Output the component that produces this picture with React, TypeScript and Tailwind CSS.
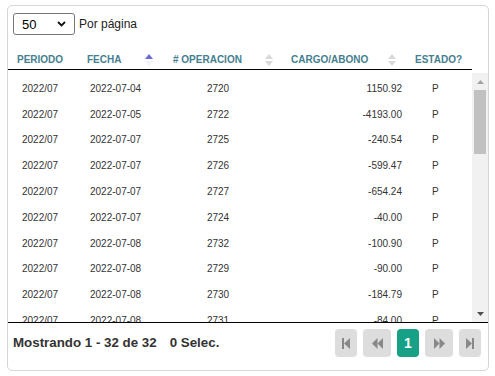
import React from 'react';

type Row = {
  periodo: string;
  fecha: string;
  operacion: string;
  monto: string;
  estado: string;
};

const rows: Row[] = [
  { periodo: '2022/07', fecha: '2022-07-04', operacion: '2720', monto: '1150.92', estado: 'P' },
  { periodo: '2022/07', fecha: '2022-07-05', operacion: '2722', monto: '-4193.00', estado: 'P' },
  { periodo: '2022/07', fecha: '2022-07-07', operacion: '2725', monto: '-240.54', estado: 'P' },
  { periodo: '2022/07', fecha: '2022-07-07', operacion: '2726', monto: '-599.47', estado: 'P' },
  { periodo: '2022/07', fecha: '2022-07-07', operacion: '2727', monto: '-654.24', estado: 'P' },
  { periodo: '2022/07', fecha: '2022-07-07', operacion: '2724', monto: '-40.00', estado: 'P' },
  { periodo: '2022/07', fecha: '2022-07-08', operacion: '2732', monto: '-100.90', estado: 'P' },
  { periodo: '2022/07', fecha: '2022-07-08', operacion: '2729', monto: '-90.00', estado: 'P' },
  { periodo: '2022/07', fecha: '2022-07-08', operacion: '2730', monto: '-184.79', estado: 'P' },
  { periodo: '2022/07', fecha: '2022-07-08', operacion: '2731', monto: '-84.00', estado: 'P' },
  { periodo: '2022/07', fecha: '2022-07-11', operacion: '2733', monto: '-35.00', estado: 'P' },
];

// icono de orden (flechas arriba/abajo)
const SortIcon: React.FC<{ active?: boolean }> = ({ active }) => (
  <svg width="8" height="14" viewBox="0 0 8 14">
    <polygon points="0,6 4,1 8,6" fill={active ? '#6b6bd8' : '#d9d9d9'} />
    <polygon points="0,8 4,13 8,8" fill={active ? '#f2f2f7' : '#d9d9d9'} />
  </svg>
);

const PagerButton: React.FC<{ wide?: boolean; children: React.ReactNode }> = ({ wide, children }) => (
  <div
    className={`${wide ? 'w-[28px]' : 'w-[22px]'} h-[28px] rounded-[4px] bg-[#dddddd] flex items-center justify-center`}
  >
    {children}
  </div>
);

const App: React.FC = () => {
  return (
    <div className="w-[495px] h-[376px] bg-white pt-[5px] pl-[7px] font-['Liberation_Sans',Arial,sans-serif] text-[#333]">
      <div className="w-[482px] h-[366px] border border-[#d6d6d6] rounded-[5px] flex flex-col">
        {/* por página */}
        <div className="pt-[7px] pl-[5px] flex items-center">
          <div className="w-[62px] h-[22px] border border-[#767676] rounded-[3px] flex items-center justify-between pl-[8px] pr-[8px]">
            <span className="text-[13px] leading-none text-black">50</span>
            <svg width="9" height="6" viewBox="0 0 9 6">
              <polyline points="1,1 4.5,4.5 8,1" fill="none" stroke="#111" strokeWidth="1.8" />
            </svg>
          </div>
          <span className="ml-[4px] text-[12px] leading-none text-[#222]">Por página</span>
        </div>

        {/* cabecera */}
        <div className="mt-[13px] h-[22px] pt-[2px] mr-[16px] border-b border-black grid grid-cols-[70px_80px_120px_127px_67px] text-[10px] font-bold text-[#45808f] leading-none">
          <div className="flex items-center pl-[9px]">PERIODO</div>
          <div className="flex items-center justify-between pl-[9px] pr-[5px]">
            <span>FECHA</span>
            <SortIcon active />
          </div>
          <div className="flex items-center justify-between pl-[15px] pr-[5px]">
            <span># OPERACION</span>
            <SortIcon />
          </div>
          <div className="flex items-center justify-between pl-[13px] pr-[9px]">
            <span>CARGO/ABONO</span>
            <SortIcon />
          </div>
          <div className="flex items-center pl-[10px]">ESTADO?</div>
        </div>

        {/* cuerpo */}
        <div className="mt-[3px] h-[249px] flex">
          <div className="flex-1 overflow-hidden pt-[3px]">
            {rows.map((row, i) => (
              <div
                key={i}
                className="h-[25.8px] grid grid-cols-[70px_80px_120px_127px_67px] text-[10px] leading-none"
              >
                <div className="flex items-center pl-[14px]">{row.periodo}</div>
                <div className="flex items-center pl-[12px]">{row.fecha}</div>
                <div className="flex items-center justify-center">{row.operacion}</div>
                <div className="flex items-center justify-end pr-[3px]">{row.monto}</div>
                <div className="flex items-center pl-[27px]">{row.estado}</div>
              </div>
            ))}
          </div>
          <div className="w-[16px] bg-[#f1f1f1] flex flex-col">
            <div className="h-[17px] flex items-center justify-center">
              <svg width="7" height="4" viewBox="0 0 7 4">
                <polygon points="0,4 3.5,0 7,4" fill="#a3a3a3" />
              </svg>
            </div>
            <div className="h-[64px] mx-[2px] bg-[#c1c1c1]" />
            <div className="flex-1" />
            <div className="h-[17px] flex items-center justify-center">
              <svg width="7" height="4" viewBox="0 0 7 4">
                <polygon points="0,0 3.5,4 7,0" fill="#505050" />
              </svg>
            </div>
          </div>
        </div>

        {/* pie */}
        <div className="flex-1 border-t border-black pt-[6px] pl-[5px] pr-[7px] flex items-start justify-between">
          <div className="h-[28px] flex items-center text-[13.33px] font-bold text-[#333] leading-none">
            <span>Mostrando 1 - 32 de 32</span>
            <span className="ml-[13px]">0 Selec.</span>
          </div>
          <div className="flex gap-[6px]">
            <PagerButton>
              <svg width="8" height="11" viewBox="0 0 8 11">
                <rect x="0" y="0" width="2" height="11" fill="#888" />
                <polygon points="8,0 2,5.5 8,11" fill="#888" />
              </svg>
            </PagerButton>
            <PagerButton wide>
              <svg width="11" height="11" viewBox="0 0 11 11">
                <polygon points="5.5,0 0,5.5 5.5,11" fill="#888" />
                <polygon points="11,0 5.5,5.5 11,11" fill="#888" />
              </svg>
            </PagerButton>
            <div className="w-[22px] h-[28px] rounded-[4px] bg-[#16a085] flex items-center justify-center text-white font-bold text-[14px] leading-none">
              1
            </div>
            <PagerButton wide>
              <svg width="11" height="11" viewBox="0 0 11 11">
                <polygon points="0,0 5.5,5.5 0,11" fill="#888" />
                <polygon points="5.5,0 11,5.5 5.5,11" fill="#888" />
              </svg>
            </PagerButton>
            <PagerButton>
              <svg width="8" height="11" viewBox="0 0 8 11">
                <polygon points="0,0 6,5.5 0,11" fill="#888" />
                <rect x="6" y="0" width="2" height="11" fill="#888" />
              </svg>
            </PagerButton>
          </div>
        </div>
      </div>
    </div>
  );
};

export default App;
